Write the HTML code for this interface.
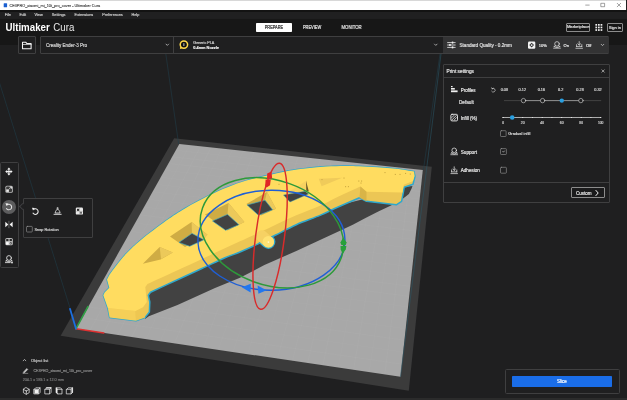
<!DOCTYPE html>
<html lang="en">
<head>
<meta charset="utf-8">
<title>CE3PRO_xiaomi_mi_10t_pro_cover - Ultimaker Cura</title>
<style>
html,body{margin:0;padding:0;}
body{width:627px;height:400px;overflow:hidden;background:#1f1f20;font-family:"Liberation Sans",sans-serif;color:#e6e6e6;position:relative;}
.abs{position:absolute;}
.t{position:absolute;white-space:nowrap;line-height:1;-webkit-text-stroke:0.7px currentColor;}
#tx{position:absolute;left:0;top:0;width:2508px;height:1600px;transform:scale(0.25);transform-origin:0 0;}
#titlebar{left:0;top:0;width:626.3px;height:9.8px;background:#ffffff;border-top:0.4px solid #d8d8d8;box-sizing:border-box;}
#menubar{left:0;top:9.6px;width:627px;height:8.9px;background:linear-gradient(#131313 0,#131313 2px,#202021 2.5px);}
#header{left:0;top:18.5px;width:627px;height:26.4px;background:#171717;}
#bottomstrip{left:0;top:398px;width:627px;height:2px;background:#2b2b2b;}
svg{position:absolute;left:0;top:0;}
.box{position:absolute;box-sizing:border-box;border:0.8px solid #3f3f40;background:#1f1f20;}
</style>
</head>
<body>
<div id="header" class="abs"></div>
<div id="menubar" class="abs"></div>
<div id="titlebar" class="abs"></div>
<svg id="scene" width="627" height="400" viewBox="0 0 627 400">
  <polygon points="174.2,138.3 431.8,166.7 408.8,390.7 60.6,335.8" fill="#3b3b3b"/>
  <polygon points="179.3,144 422.8,170 400.5,376.8 76,328.7" fill="#a8a8a8"/>
  <g stroke="#ffffff" stroke-opacity="0.045" stroke-width="0.6"><line x1="189.9" y1="145.1" x2="89.8" y2="330.8"/><line x1="175.8" y1="150.3" x2="422.0" y2="177.0"/><line x1="200.5" y1="146.3" x2="103.8" y2="332.8"/><line x1="172.1" y1="156.8" x2="421.3" y2="184.1"/><line x1="211.1" y1="147.4" x2="117.8" y2="334.9"/><line x1="168.4" y1="163.5" x2="420.5" y2="191.5"/><line x1="221.8" y1="148.5" x2="131.9" y2="337.0"/><line x1="164.6" y1="170.3" x2="419.7" y2="199.0"/><line x1="232.6" y1="149.7" x2="146.0" y2="339.1"/><line x1="160.7" y1="177.3" x2="418.8" y2="206.7"/><line x1="243.4" y1="150.8" x2="160.3" y2="341.2"/><line x1="156.7" y1="184.4" x2="418.0" y2="214.7"/><line x1="254.2" y1="152.0" x2="174.6" y2="343.3"/><line x1="152.6" y1="191.7" x2="417.1" y2="222.8"/><line x1="265.1" y1="153.2" x2="189.1" y2="345.5"/><line x1="148.4" y1="199.3" x2="416.2" y2="231.1"/><line x1="276.0" y1="154.3" x2="203.6" y2="347.6"/><line x1="144.1" y1="207.0" x2="415.3" y2="239.7"/><line x1="287.0" y1="155.5" x2="218.2" y2="349.8"/><line x1="139.7" y1="214.9" x2="414.3" y2="248.5"/><line x1="298.1" y1="156.7" x2="232.9" y2="352.0"/><line x1="135.1" y1="223.0" x2="413.4" y2="257.6"/><line x1="309.1" y1="157.9" x2="247.6" y2="354.1"/><line x1="130.5" y1="231.3" x2="412.4" y2="266.9"/><line x1="320.3" y1="159.1" x2="262.5" y2="356.3"/><line x1="125.7" y1="239.9" x2="411.3" y2="276.4"/><line x1="331.5" y1="160.2" x2="277.5" y2="358.6"/><line x1="120.8" y1="248.7" x2="410.3" y2="286.3"/><line x1="342.7" y1="161.4" x2="292.5" y2="360.8"/><line x1="115.7" y1="257.7" x2="409.2" y2="296.4"/><line x1="354.0" y1="162.7" x2="307.7" y2="363.0"/><line x1="110.5" y1="267.0" x2="408.0" y2="306.9"/><line x1="365.3" y1="163.9" x2="322.9" y2="365.3"/><line x1="105.2" y1="276.5" x2="406.9" y2="317.7"/><line x1="376.7" y1="165.1" x2="338.2" y2="367.6"/><line x1="99.7" y1="286.4" x2="405.7" y2="328.8"/><line x1="388.2" y1="166.3" x2="353.6" y2="369.9"/><line x1="94.0" y1="296.5" x2="404.4" y2="340.2"/><line x1="399.7" y1="167.5" x2="369.2" y2="372.2"/><line x1="88.2" y1="306.9" x2="403.2" y2="352.0"/><line x1="411.2" y1="168.8" x2="384.8" y2="374.5"/><line x1="82.2" y1="317.6" x2="401.9" y2="364.2"/></g>
  <g stroke="#1f3f4c" stroke-width="0.55" fill="none">
    <line x1="165.8" y1="53.8" x2="178.6" y2="144"/>
    <line x1="-9.5" y1="54" x2="70" y2="308"/>
    <line x1="440" y1="54" x2="423.4" y2="170"/>
    <line x1="441" y1="54" x2="400.5" y2="376.8" stroke="#2a5868"/>
  </g>
  <path d="M145.0 319.0L148.8 316.3L177.5 305.0L215.0 288.0L240.0 277.8L264.4 265.0L296.3 251.0L320.0 240.0L340.0 230.8L352.8 224.7L365.5 218.0L378.3 211.5L391.0 205.5L401.2 200.0L408.9 193.9L411.6 188.5L412.5 186.0L404.0 187.0L380.0 195.0L300.0 215.0L200.0 262.0L150.0 290.0Z" fill="#424242"/>
  <path d="M109.6 274.6C110.7 273.1 113.6 269.1 116.4 265.5C119.2 261.9 122.5 257.6 126.6 253.3C130.7 249.1 134.3 245.4 140.9 240.0C147.5 234.6 159.0 225.9 166.3 220.6C173.7 215.3 177.9 212.6 185.0 208.4C192.1 204.2 201.7 199.1 208.8 195.6C215.9 192.1 221.2 189.7 227.5 187.2C233.8 184.7 240.1 182.5 246.3 180.6C252.6 178.7 257.9 177.6 265.0 176.0C272.1 174.4 281.7 172.1 288.8 170.8C295.9 169.5 301.2 168.9 307.5 168.2C313.8 167.5 320.1 167.0 326.3 166.6C332.6 166.2 339.6 166.1 345.0 166.0C350.4 165.9 353.4 166.1 358.8 166.3C364.2 166.5 371.2 166.9 377.5 167.3C383.8 167.7 390.2 168.1 396.3 168.8C402.4 169.5 411.1 171.1 414.0 171.6L415.0 176.3L413.0 184.2L404.2 187.3L403.3 192.5L401.6 201.3L396.3 204.8L366.5 201.3L359.5 197.8C355.8 199.4 344.1 204.4 337.5 207.3C330.9 210.2 326.9 212.5 320.0 215.4C313.1 218.3 303.7 221.4 296.3 224.7C288.9 228.0 282.2 231.7 275.6 235.0C269.1 238.3 262.9 241.6 257.0 244.4C251.1 247.2 245.4 249.7 240.0 252.0C234.6 254.3 230.8 255.2 224.4 258.0C218.1 260.8 209.7 264.9 201.9 268.5C194.1 272.1 186.1 275.7 177.5 279.7C168.9 283.7 155.0 290.2 150.5 292.3L148.3 295.3L149.8 302.0L149.4 312.0L145.0 317.6L136.0 320.8L109.6 317.4L107.8 308.0L103.3 295.3L104.8 292.3L109.3 287.8L107.0 279.5Z" fill="#ecc655" stroke="#2fa8cc" stroke-width="1.5" stroke-linejoin="round"/>
  <polygon fill="#f5cf58" points="107.8,308 135.5,311 136,320.8 109.6,317.4"/>
  <polygon fill="#eec752" points="135.5,311 143,307.3 145,317.6 136,320.8"/>
  <path d="M109.6 274.6C110.7 273.1 113.6 269.1 116.4 265.5C119.2 261.9 122.5 257.6 126.6 253.3C130.7 249.1 134.3 245.4 140.9 240.0C147.5 234.6 159.0 225.9 166.3 220.6C173.7 215.3 177.9 212.6 185.0 208.4C192.1 204.2 201.7 199.1 208.8 195.6C215.9 192.1 221.2 189.7 227.5 187.2C233.8 184.7 240.1 182.5 246.3 180.6C252.6 178.7 257.9 177.6 265.0 176.0C272.1 174.4 281.7 172.1 288.8 170.8C295.9 169.5 301.2 168.9 307.5 168.2C313.8 167.5 320.1 167.0 326.3 166.6C332.6 166.2 339.6 166.1 345.0 166.0C350.4 165.9 353.4 166.1 358.8 166.3C364.2 166.5 371.2 166.9 377.5 167.3C383.8 167.7 390.2 168.1 396.3 168.8C402.4 169.5 411.1 171.1 414.0 171.6L414.6 176.0L413.0 181.0L403.8 184.7L402.5 192.5L366.5 191.7L360.4 186.4C356.6 188.2 344.2 193.8 337.5 197.0C330.8 200.2 326.9 202.6 320.0 205.7C313.1 208.8 305.0 211.5 296.3 215.3C287.6 219.1 277.4 224.1 268.0 228.4C258.6 232.7 250.4 236.5 240.0 241.3C229.6 246.1 216.1 252.4 205.7 257.2C195.3 262.0 187.2 265.8 177.5 270.3C167.8 274.8 152.5 281.7 147.5 284.0L145.3 287.0L146.8 302.0L143.0 307.3L135.5 311.0L107.8 308.0L103.3 295.3L104.8 292.3L109.3 287.8L107.0 279.5Z" fill="#ffdc60"/>
  <polygon fill="#d9b447" points="360.4,186.4 366.5,191.7 366.5,201.3 359.5,197.8"/>
  <g>
    <polygon fill="#cfac44" points="142.8,263.8 159.7,246.9 172.8,252.5 160.6,259.4"/>
    <polygon fill="#ecc95a" points="159.7,246.9 172.8,252.5 161,259"/>
    <polygon fill="#cfac44" points="170,236.6 191.6,222 207.5,234.7 185,246.9"/>
    <polygon fill="#ecc95a" points="191.6,222 207.5,234.7 203.8,239.8 192,233.4"/>
    <polygon fill="#424242" stroke="#2fa8cc" stroke-width="0.6" points="179,242.4 192,233.4 203.8,239.8 189.7,246.3"/>
    <polygon fill="#cfac44" points="205,214.4 228.5,203 244.4,222 227.5,230.5"/>
    <polygon fill="#ecc95a" points="228.5,203 244.4,222 238.8,224.7 227.5,214.4"/>
    <polygon fill="#424242" stroke="#2fa8cc" stroke-width="0.6" points="212.5,221 227.5,214.4 238.8,224.7 225.6,230.3"/>
    <polygon fill="#cfac44" points="246.3,204 267,192 276,208.8 261,215.5"/>
    <polygon fill="#ecc95a" points="267,192 276,208.8 272.5,209.7 265,200.3"/>
    <polygon fill="#424242" stroke="#2fa8cc" stroke-width="0.6" points="247.2,205 265,200.3 272.5,209.7 258.5,215.3"/>
    <polygon fill="#f7d260" points="283.5,195 306,181 308.5,194 290,202"/>
    <polygon fill="#424242" stroke="#2fa8cc" stroke-width="0.4" points="283.5,195 305,191.2 308.5,194 290,202"/>
    <polygon fill="#6b5a2a" points="306,180.5 308.8,191.5 306.3,190.8"/>
    <polygon fill="#f0cb5a" points="318.8,178.8 342.2,177.8 321.6,186.3"/>
    <rect x="384.5" y="172.0" width="1" height="1.1" fill="#c9a63e"/><rect x="394.8" y="173.9" width="1" height="1.1" fill="#c9a63e"/><rect x="399.5" y="173.9" width="1" height="1.1" fill="#c9a63e"/><rect x="405.1" y="172.9" width="1" height="1.1" fill="#c9a63e"/><rect x="409.8" y="173.5" width="1" height="1.1" fill="#c9a63e"/><rect x="358.3" y="180.5" width="1" height="1.1" fill="#c9a63e"/><rect x="361.1" y="180.5" width="1" height="1.1" fill="#c9a63e"/><rect x="345.1" y="186.1" width="1" height="1.1" fill="#c9a63e"/><rect x="347.9" y="186.1" width="1" height="1.1" fill="#c9a63e"/><rect x="321.5" y="179.0" width="1" height="1.1" fill="#c9a63e"/><rect x="343.5" y="177.5" width="1" height="1.1" fill="#c9a63e"/><rect x="278.5" y="183.8" width="1" height="1.1" fill="#c9a63e"/><rect x="360.5" y="182.5" width="1" height="1.1" fill="#c9a63e"/>
  </g>
  <g>
    <clipPath id="pinclip"><polygon points="240,251 257,243.4 275.6,234 290,227 290,262 240,262"/></clipPath>
    <line x1="261.9" y1="236.1" x2="268.3" y2="241.8" stroke="#2fa8cc" stroke-width="14.2" stroke-linecap="round" clip-path="url(#pinclip)"/>
    <line x1="261.9" y1="236.1" x2="268.3" y2="241.8" stroke="#f6d163" stroke-width="11.6" stroke-linecap="round"/>
    <circle cx="268.3" cy="241.8" r="5.7" fill="#ffe272"/>
    <circle cx="268.4" cy="242.1" r="0.9" fill="#fff6c8"/>
  </g>
  <g stroke-linecap="round" fill="none">
    <line x1="76" y1="328.7" x2="103.8" y2="333" stroke="#e03131" stroke-width="1.6"/>
    <line x1="76" y1="328.7" x2="88" y2="306.5" stroke="#2f9e44" stroke-width="1.6"/>
    <line x1="76" y1="328.7" x2="70" y2="308.8" stroke="#1c6fe0" stroke-width="1.8"/>
  </g>
  <g fill="none" stroke-width="1.45">
    <ellipse cx="271.4" cy="240.2" rx="73.5" ry="50" transform="rotate(-0.5 271.4 240.2)" stroke="#1f5fd6"/>
    <ellipse cx="271.9" cy="232.8" rx="73.7" ry="52.2" transform="rotate(19.7 271.9 232.8)" stroke="#2d9a3a"/>
    <ellipse cx="270.1" cy="236.3" rx="14.4" ry="73.6" transform="rotate(7.4 270.1 236.3)" stroke="#d92b2b"/>
  </g>
  <g>
    <polygon fill="#2277ee" points="241.8,287.2 250.8,283.8 250.6,292.4"/>
    <polygon fill="#2277ee" points="266.6,290.2 257.6,285.4 258.4,293.8"/>
    <polygon fill="#e02525" points="267.2,173.6 271.4,171.4 272.2,178.6 267,179"/>
    <polygon fill="#e02525" points="265.6,179.6 270.8,179.4 270,185.2 266.6,187.6 265.2,186"/>
    <polygon fill="#27a03a" points="343.3,237.4 346.6,242.4 345.8,245 341.4,245 340.4,242.6"/>
    <polygon fill="#27a03a" points="340.5,246.1 346.4,246.1 345.8,249.2 342.7,254 340.7,249.4"/>
  </g>
</svg>
<div id="bottomstrip" class="abs"></div>
<!-- stage bar -->
<div class="box" style="left:17.6px;top:36px;width:18.6px;height:17.6px;border-radius:1px;"></div>
<div class="box" style="left:39.6px;top:36px;width:569.6px;height:17.6px;border-radius:1px;"></div>
<div class="abs" style="left:173.4px;top:36.4px;width:0.8px;height:16.8px;background:#3f3f40;"></div>
<div class="abs" style="left:442.6px;top:36.6px;width:166.2px;height:16.4px;background:#333334;"></div>
<!-- prepare button -->
<div class="abs" style="left:255.7px;top:22.9px;width:36.3px;height:9.1px;background:#ffffff;border-radius:0.8px;"></div>
<!-- marketplace / sign in -->
<div class="abs" style="left:565.9px;top:22.9px;width:24.5px;height:8.8px;border:0.75px solid #8c8c8c;border-radius:1px;box-sizing:border-box;"></div>
<div class="abs" style="left:607.1px;top:22.9px;width:15.5px;height:8.8px;border:0.75px solid #8c8c8c;border-radius:1px;box-sizing:border-box;"></div>
<!-- print settings panel -->
<div class="box" style="left:442.6px;top:64.2px;width:167.2px;height:138.5px;border-radius:1px;"></div>
<div class="abs" style="left:443px;top:77.3px;width:166.4px;height:0.7px;background:#3f3f40;"></div>
<div class="abs" style="left:443px;top:182.2px;width:166.4px;height:0.7px;background:#3f3f40;"></div>
<div class="abs" style="left:571.4px;top:187.2px;width:33.6px;height:11.3px;border:0.7px solid #8c8c8c;border-bottom-width:1.2px;border-radius:1px;box-sizing:border-box;background:#1b1b1c;"></div>
<!-- toolbar -->
<div class="box" style="left:-0.2px;top:162px;width:18.8px;height:105.8px;border-radius:1.5px;"></div>
<div class="abs" style="left:2px;top:199.8px;width:13.8px;height:13.8px;border-radius:50%;background:#5d5d5e;"></div>
<div class="box" style="left:22.8px;top:197.8px;width:70px;height:40.4px;border-radius:1px;"></div>
<div class="abs" style="left:20.4px;top:204.1px;width:5px;height:5px;background:#1f1f20;border-left:0.8px solid #3f3f40;border-bottom:0.8px solid #3f3f40;transform:rotate(45deg);box-sizing:border-box;"></div>
<!-- slice panel -->
<div class="box" style="left:504.6px;top:369.2px;width:115.6px;height:24.4px;border-radius:1.5px;"></div>
<div class="abs" style="left:512.1px;top:375.8px;width:100px;height:11px;background:#1a6de8;border-radius:0.8px;"></div>
<svg id="icons" width="627" height="400" viewBox="0 0 627 400" fill="none" stroke-linecap="round" stroke-linejoin="round">
  <!-- title bar: app icon & window controls -->
  <rect x="3.7" y="3.2" width="3.4" height="4.1" rx="0.6" fill="#1a5fd0"/>
  <path d="M585.7 5.1h3.5" stroke="#444" stroke-width="0.5"/>
  <rect x="601.2" y="3.3" width="3.4" height="3.4" stroke="#444" stroke-width="0.5"/>
  <path d="M617.2 3.3l3.5 3.5M620.7 3.3l-3.5 3.5" stroke="#444" stroke-width="0.5"/>
  <!-- folder -->
  <path d="M22.5 42.2h3.2l1 1.2h4.4v5.4h-8.6z" stroke="#f4f4f4" stroke-width="1.05"/>
  <path d="M22.5 44.5h8.6" stroke="#f4f4f4" stroke-width="0.7"/>
  <!-- chevrons -->
  <g stroke="#d8d8d8" stroke-width="0.7">
    <path d="M166 44.1l1.3 1.3 1.3-1.3"/>
    <path d="M434.5 44.1l1.3 1.3 1.3-1.3"/>
    <path d="M601.2 44.3l1.3 1.3 1.3-1.3"/>
    <path d="M23.2 360.8l1.3-1.4 1.3 1.4"/>
    <path d="M595.9 190.4l2.3 2.6-2.3 2.6" stroke="#f4f4f4" stroke-width="1"/>
  </g>
  <!-- extruder icon -->
  <circle cx="183.9" cy="44.6" r="3.7" fill="#111" stroke="#ffd84a" stroke-width="1.5"/>
  <path d="M180.3 46.5l-0.4 2.6 2.6-0.9z" fill="#ffd84a"/>
  <rect x="183.5" y="43.2" width="0.8" height="2.8" fill="#f0f0f0"/>
  <!-- sliders icon -->
  <g stroke="#f0f0f0" stroke-width="0.8">
    <path d="M447.6 42.6h7.6M447.6 45h7.6M447.6 47.4h7.6"/>
  </g>
  <g fill="#f0f0f0"><rect x="451.8" y="41.6" width="1.5" height="2"/><rect x="449.2" y="44" width="1.5" height="2"/><rect x="451.8" y="46.4" width="1.5" height="2"/></g>
  <!-- summary icons -->
  <rect x="528" y="41.5" width="7.3" height="7.2" rx="1.2" fill="#f2f2f2"/>
  <path d="M531.65 42.7l2.4 2.4-2.4 2.4-2.4-2.4z" fill="#333334"/>
  <circle cx="531.65" cy="45.1" r="0.9" fill="#f2f2f2"/>
  <g stroke="#e8e8e8" stroke-width="0.7">
    <path d="M553.6 48.2h6.8M554 46.8l1.2-1.2M560 46.8l-1.2-1.2"/>
    <circle cx="557" cy="43.9" r="2.3"/>
    <path d="M554.2 46.6l2.8 1 2.8-1"/>
  </g>
  <g stroke="#e8e8e8" stroke-width="0.7">
    <path d="M575.9 48.3h6.6M576.6 46.6h5.2M576.6 44.6v2M581.8 44.6v2"/>
    <path d="M579.2 41.6v3.4M577.8 43.8l1.4 1.4 1.4-1.4"/>
  </g>
  <!-- grid icon -->
  <g fill="#f0f0f0">
    <rect x="595.4" y="24" width="1.7" height="1.7"/><rect x="598" y="24" width="1.7" height="1.7"/><rect x="600.6" y="24" width="1.7" height="1.7"/>
    <rect x="595.4" y="26.6" width="1.7" height="1.7"/><rect x="598" y="26.6" width="1.7" height="1.7"/><rect x="600.6" y="26.6" width="1.7" height="1.7"/>
    <rect x="595.4" y="29.2" width="1.7" height="1.7"/><rect x="598" y="29.2" width="1.7" height="1.7"/><rect x="600.6" y="29.2" width="1.7" height="1.7"/>
  </g>
  <!-- print settings panel icons -->
  <path d="M601.9 69.8l2.4 2.4M604.3 69.8l-2.4 2.4" stroke="#e8e8e8" stroke-width="0.6"/>
  <g fill="#f0f0f0"><rect x="451" y="86" width="1.6" height="1.2"/><rect x="451" y="88" width="3.8" height="1.6"/><rect x="451" y="90.4" width="6.6" height="1.8"/></g>
  <g stroke="#e0e0e0" stroke-width="0.6"><path d="M492.2 88.6a1.9 1.9 0 1 1 -0.6 2.6"/><path d="M491.6 87.8l0.5 1.1 1.2-0.3"/></g>
  <!-- quality slider -->
  <path d="M504.4 100.6h96.4" stroke="#5a5a5a" stroke-width="0.6"/>
  <path d="M523.5 100.6h57.4" stroke="#b0b0b0" stroke-width="0.7"/>
  <circle cx="523.5" cy="100.6" r="2.2" fill="#1f1f20" stroke="#d8d8d8" stroke-width="0.6"/>
  <circle cx="542.6" cy="100.6" r="2.2" fill="#1f1f20" stroke="#d8d8d8" stroke-width="0.6"/>
  <circle cx="580.9" cy="100.6" r="2.2" fill="#1f1f20" stroke="#d8d8d8" stroke-width="0.6"/>
  <circle cx="561.8" cy="100.6" r="2.2" fill="#2a9fe0"/>
  <!-- infill icon -->
  <rect x="450.9" y="114.3" width="6.6" height="6.6" rx="1.1" stroke="#f0f0f0" stroke-width="0.9"/>
  <path d="M452 119.8l4.4-4.4M452 117.4l2-2M454.4 119.8l2-2" stroke="#f0f0f0" stroke-width="0.8"/>
  <!-- infill slider -->
  <path d="M502.6 117.5h98.2" stroke="#d0d0d0" stroke-width="0.8"/>
  <g fill="#f0f0f0">
    <circle cx="503.2" cy="117.5" r="0.6"/><circle cx="522.7" cy="117.5" r="0.6"/><circle cx="542.2" cy="117.5" r="0.6"/><circle cx="561.7" cy="117.5" r="0.6"/><circle cx="581.2" cy="117.5" r="0.6"/><circle cx="600.7" cy="117.5" r="0.6"/>
    <circle cx="512.95" cy="117.5" r="0.5"/><circle cx="532.45" cy="117.5" r="0.5"/><circle cx="551.95" cy="117.5" r="0.5"/><circle cx="571.45" cy="117.5" r="0.5"/><circle cx="590.95" cy="117.5" r="0.5"/>
  </g>
  <circle cx="512.2" cy="117.5" r="2.3" fill="#2a9fe0"/>
  <!-- checkboxes -->
  <g stroke="#9a9a9a" stroke-width="0.6">
    <rect x="500.5" y="130.7" width="5.6" height="5.8" rx="0.8"/>
    <rect x="500.5" y="148.6" width="5.9" height="5.9" rx="0.8"/>
    <rect x="500.5" y="167.3" width="5.9" height="5.9" rx="0.8"/>
    <rect x="26.5" y="226.4" width="5.8" height="5.6" rx="0.8"/>
  </g>
  <path d="M502.8 151.6l0.6 0.6 1-1.2" stroke="#f0f0f0" stroke-width="0.6"/>
  <!-- support icon (panel) -->
  <g stroke="#f0f0f0" stroke-width="0.7">
    <path d="M450.8 154.7h6.8M451.2 153.2l1.2-1.2M457.2 153.2l-1.2-1.2"/>
    <circle cx="454.2" cy="150.3" r="2.3"/>
    <path d="M451.4 153l2.8 1 2.8-1"/>
  </g>
  <!-- adhesion icon (panel) -->
  <g stroke="#f0f0f0" stroke-width="0.7">
    <path d="M450.9 173.6h6.6M451.6 171.9h5.2M451.6 169.9v2M456.8 169.9v2"/>
    <path d="M454.2 166.8v3.4M452.8 169l1.4 1.4 1.4-1.4"/>
  </g>
  <!-- toolbar icons -->
  <g stroke="#f4f4f4" stroke-width="1.05" stroke-linecap="butt">
    <path d="M8.9 169v5.2M6.4 171.6h5"/>
  </g>
  <g fill="#f4f4f4">
    <path d="M8.9 167.6l1.7 2h-3.4z"/><path d="M8.9 175.6l1.7-2h-3.4z"/>
    <path d="M5.2 171.6l2-1.7v3.4z"/><path d="M12.6 171.6l-2-1.7v3.4z"/>
  </g>
  <g>
    <rect x="5.4" y="185.7" width="7.4" height="7" rx="1.5" fill="#bdbdbd"/>
    <rect x="6.2" y="186.5" width="5.8" height="5.4" rx="0.9" fill="#3a3a3a"/>
    <rect x="6.2" y="189.4" width="2.7" height="2.5" fill="#e8e8e8"/>
    <path d="M9.3 189l2-2M9.9 186.8h1.6v1.6" stroke="#f0f0f0" stroke-width="0.8" fill="none"/>
  </g>
  <g stroke="#e4e4e4" stroke-width="1.05" stroke-linecap="butt">
    <path d="M6.9 205a2.8 2.8 0 1 1 -0.6 3.2"/>
  </g>
  <path d="M5.5 203.2l2.9 0.3-1.9 2.4z" fill="#f4f4f4"/>
  <g fill="#f4f4f4">
    <path d="M5.3 221.7l3 2.8-3 2.8z"/><path d="M12.6 221.7l-3 2.8 3 2.8z"/>
    <rect x="8.65" y="220.8" width="0.6" height="7.4" fill="#8a8a8a"/>
  </g>
  <g>
    <rect x="5.3" y="238" width="7.5" height="7.3" rx="1.5" fill="#c4c4c4"/>
    <rect x="6.2" y="238.9" width="2.3" height="2.2" fill="#2a2a2a"/>
    <rect x="9.6" y="238.9" width="2.3" height="2.2" fill="#2a2a2a"/>
    <rect x="6.1" y="242.2" width="2.5" height="2.4" fill="#ffffff"/>
    <circle cx="10.8" cy="243.4" r="1.1" fill="#2a2a2a"/>
    <circle cx="10.8" cy="243.4" r="0.5" fill="#f0f0f0"/>
  </g>
  <g stroke="#f0f0f0" stroke-width="0.8">
    <path d="M5.4 262.6h4.8M5.9 261l1.2-1.2M12.1 261l-1.2-1.2"/>
    <circle cx="9" cy="258" r="2.4"/>
    <path d="M6.1 260.8l2.9 1 2.9-1"/>
    <circle cx="12" cy="262.6" r="0.9" fill="#f0f0f0" stroke="none"/>
  </g>
  <!-- rotate tool panel icons -->
  <g stroke="#f0f0f0" stroke-width="1.05" stroke-linecap="butt">
    <path d="M33.5 209.5a2.8 2.8 0 1 1 -0.7 3.3"/>
  </g>
  <path d="M32 207.7l2.9 0.3-1.9 2.4z" fill="#f4f4f4"/>
  <g stroke="#f0f0f0" stroke-width="0.9">
    <path d="M54 214.3h7.2"/>
    <path d="M55.2 212.6c0.4-2 1.2-3.1 2.4-3.1s2 1.1 2.4 3.1z" stroke-width="0.8"/>
    <path d="M57.6 207.4v1.6M56.8 208.2h1.6" stroke-width="0.6"/>
  </g>
  <g>
    <rect x="75.8" y="207.6" width="7.2" height="7" rx="1.2" fill="#e8e8e8"/>
    <rect x="77" y="208.8" width="2.1" height="2.1" fill="#2a2a2a"/>
    <rect x="79.9" y="211.7" width="2.1" height="2" fill="#6a6a6a"/>
    <path d="M79.5 208v6.4M76.2 211.3h6.4" stroke="#8a8a8a" stroke-width="0.35"/>
  </g>
  <!-- object list icons -->
  <g stroke="#c8c8c8" stroke-width="0.7">
    <path d="M23.4 372.2l3.4-3.6 0.9 0.9-3.4 3.4z" fill="#c8c8c8"/>
    <path d="M23 373.4h4.8" stroke-width="0.5"/>
  </g>
  <g stroke="#f0f0f0" stroke-width="0.7">
    <path d="M26.3 387.7l2.9 1.6v3.4l-2.9 1.6-2.9-1.6v-3.4zM26.3 391v3.2M26.3 391l-2.8-1.6M26.3 391l2.8-1.6"/>
    <path d="M34.2 389.3h4.4v4.6h-4.4zM34.2 389.3l1.5-1.5h4.4l-1.5 1.5M40.1 387.8v4.6l-1.5 1.5" />
    <rect x="34.5" y="389.6" width="3.8" height="4" fill="#f0f0f0" stroke="none"/>
    <path d="M45.2 389.3h4.4v4.6h-4.4zM45.2 389.3l1.5-1.5h4.4l-1.5 1.5M51.1 387.8v4.6l-1.5 1.5"/>
    <path d="M46.3 387.9h4.6v-0.1" stroke-width="1"/>
    <path d="M57.6 389.3h4.4v4.6h-4.4zM57.6 389.3l-1.5-1.5h4.4l1.5 1.5M56.1 387.8v4.6l1.5 1.5"/>
    <path d="M56.5 388.5v4" stroke-width="1.1"/>
    <path d="M66.7 389.3h4.4v4.6h-4.4zM66.7 389.3l1.5-1.5h4.4l-1.5 1.5M72.6 387.8v4.6l-1.5 1.5"/>
    <path d="M72.2 388.5v4" stroke-width="1.1"/>
  </g>
</svg>

<div id="tx">
<div class="t" style="left:37.6px;top:13.1px;font-size:15.32px;color:#2a2a2a;font-weight:400;-webkit-text-stroke:0.3px currentColor;transform:scaleY(1.08);transform-origin:50% 58%;">CE3PRO_xiaomi_mi_10t_pro_cover - Ultimaker Cura</div>
<div class="t" style="left:19.2px;top:49.6px;font-size:15.20px;color:#c8c8c8;font-weight:400;">File</div>
<div class="t" style="left:78.4px;top:49.6px;font-size:15.20px;color:#c8c8c8;font-weight:400;">Edit</div>
<div class="t" style="left:138.0px;top:49.6px;font-size:15.20px;color:#c8c8c8;font-weight:400;">View</div>
<div class="t" style="left:207.2px;top:49.6px;font-size:15.20px;color:#c8c8c8;font-weight:400;">Settings</div>
<div class="t" style="left:298.4px;top:49.6px;font-size:15.20px;color:#c8c8c8;font-weight:400;">Extensions</div>
<div class="t" style="left:409.2px;top:49.6px;font-size:15.20px;color:#c8c8c8;font-weight:400;">Preferences</div>
<div class="t" style="left:526.0px;top:49.6px;font-size:15.20px;color:#c8c8c8;font-weight:400;">Help</div>
<div class="t" style="left:21.6px;top:90.2px;font-size:38.96px;color:#ffffff;font-weight:700;-webkit-text-stroke:0;transform:scaleY(1.1);transform-origin:50% 58%;">Ultimaker</div>
<div class="t" style="left:213.2px;top:90.3px;font-size:38.80px;color:#e8e8e8;font-weight:400;-webkit-text-stroke:0;transform:scaleY(1.1);transform-origin:50% 58%;">Cura</div>
<div class="t" style="left:695.6px;width:800px;text-align:center;top:102.0px;font-size:15.60px;color:#333;font-weight:400;transform:scaleY(1.25);transform-origin:50% 58%;">PREPARE</div>
<div class="t" style="left:848.4px;width:800px;text-align:center;top:101.8px;font-size:15.80px;color:#e0e0e0;font-weight:400;transform:scaleY(1.25);transform-origin:50% 58%;">PREVIEW</div>
<div class="t" style="left:1006.4px;width:800px;text-align:center;top:101.0px;font-size:17.20px;color:#e0e0e0;font-weight:400;transform:scaleY(1.15);transform-origin:50% 58%;">MONITOR</div>
<div class="t" style="left:1912.8px;width:800px;text-align:center;top:100.4px;font-size:16.60px;color:#e0e0e0;font-weight:400;">Marketplace</div>
<div class="t" style="left:2059.6px;width:800px;text-align:center;top:100.8px;font-size:15.80px;color:#e0e0e0;font-weight:400;">Sign in</div>
<div class="t" style="left:183.6px;top:174.3px;font-size:18.16px;color:#d8d8d8;font-weight:400;">Creality Ender-3 Pro</div>
<div class="t" style="left:773.2px;top:164.8px;font-size:14.80px;color:#d0d0d0;font-weight:400;">Generic PLA</div>
<div class="t" style="left:773.2px;top:183.4px;font-size:15.48px;color:#f0f0f0;font-weight:700;">0.4mm Nozzle</div>
<div class="t" style="left:1838.0px;top:173.7px;font-size:18.40px;color:#e0e0e0;font-weight:400;">Standard Quality - 0.2mm</div>
<div class="t" style="left:2154.8px;top:173.8px;font-size:16.20px;color:#e8e8e8;font-weight:400;">10%</div>
<div class="t" style="left:2254.0px;top:173.8px;font-size:16.20px;color:#e8e8e8;font-weight:400;">On</div>
<div class="t" style="left:2344.4px;top:173.8px;font-size:16.20px;color:#e8e8e8;font-weight:400;">Off</div>
<div class="t" style="left:1786.0px;top:276.2px;font-size:19.04px;color:#e6e6e6;font-weight:400;">Print settings</div>
<div class="t" style="left:1842.8px;top:354.0px;font-size:17.88px;color:#e6e6e6;font-weight:400;">Profiles</div>
<div class="t" style="left:1835.6px;top:398.5px;font-size:18.80px;color:#e0e0e0;font-weight:400;">Default</div>
<div class="t" style="left:1617.6px;width:800px;text-align:center;top:351.3px;font-size:15.40px;color:#d8d8d8;font-weight:400;">0.08</div>
<div class="t" style="left:1689.2px;width:800px;text-align:center;top:351.3px;font-size:15.40px;color:#d8d8d8;font-weight:400;">0.12</div>
<div class="t" style="left:1765.6px;width:800px;text-align:center;top:351.3px;font-size:15.40px;color:#d8d8d8;font-weight:400;">0.16</div>
<div class="t" style="left:1842.8px;width:800px;text-align:center;top:351.3px;font-size:15.40px;color:#d8d8d8;font-weight:400;">0.2</div>
<div class="t" style="left:1920.4px;width:800px;text-align:center;top:351.3px;font-size:15.40px;color:#d8d8d8;font-weight:400;">0.28</div>
<div class="t" style="left:1992.0px;width:800px;text-align:center;top:351.3px;font-size:15.40px;color:#d8d8d8;font-weight:400;">0.32</div>
<div class="t" style="left:1842.8px;top:465.1px;font-size:18.16px;color:#e6e6e6;font-weight:400;">Infill (%)</div>
<div class="t" style="left:1612.8px;width:800px;text-align:center;top:483.1px;font-size:13.20px;color:#d0d0d0;font-weight:400;">0</div>
<div class="t" style="left:1690.8px;width:800px;text-align:center;top:483.1px;font-size:13.20px;color:#d0d0d0;font-weight:400;">20</div>
<div class="t" style="left:1768.8px;width:800px;text-align:center;top:483.1px;font-size:13.20px;color:#d0d0d0;font-weight:400;">40</div>
<div class="t" style="left:1846.8px;width:800px;text-align:center;top:483.1px;font-size:13.20px;color:#d0d0d0;font-weight:400;">60</div>
<div class="t" style="left:1924.8px;width:800px;text-align:center;top:483.1px;font-size:13.20px;color:#d0d0d0;font-weight:400;">80</div>
<div class="t" style="left:2002.8px;width:800px;text-align:center;top:483.1px;font-size:13.20px;color:#d0d0d0;font-weight:400;">100</div>
<div class="t" style="left:2032.8px;top:525.1px;font-size:15.96px;color:#d8d8d8;font-weight:400;">Gradual infill</div>
<div class="t" style="left:1842.8px;top:598.9px;font-size:18.72px;color:#e6e6e6;font-weight:400;">Support</div>
<div class="t" style="left:1842.8px;top:673.9px;font-size:18.40px;color:#e6e6e6;font-weight:400;">Adhesion</div>
<div class="t" style="left:2304.0px;top:764.5px;font-size:18.12px;color:#e6e6e6;font-weight:400;">Custom</div>
<div class="t" style="left:138.0px;top:910.7px;font-size:15.28px;color:#d0d0d0;font-weight:400;">Snap Rotation</div>
<div class="t" style="left:124.4px;top:1432.6px;font-size:15.60px;color:#c0c0c0;font-weight:400;">Object list</div>
<div class="t" style="left:133.6px;top:1475.9px;font-size:14.60px;color:#8a8a8a;font-weight:400;">CE3PRO_xiaomi_mi_10t_pro_cover</div>
<div class="t" style="left:90.8px;top:1508.5px;font-size:15.00px;color:#767676;font-weight:400;">204.1 x 189.1 x 12.0 mm</div>
<div class="t" style="left:1848.0px;width:800px;text-align:center;top:1517.6px;font-size:18.00px;color:#ffffff;font-weight:400;">Slice</div>
</div>
</body>
</html>
